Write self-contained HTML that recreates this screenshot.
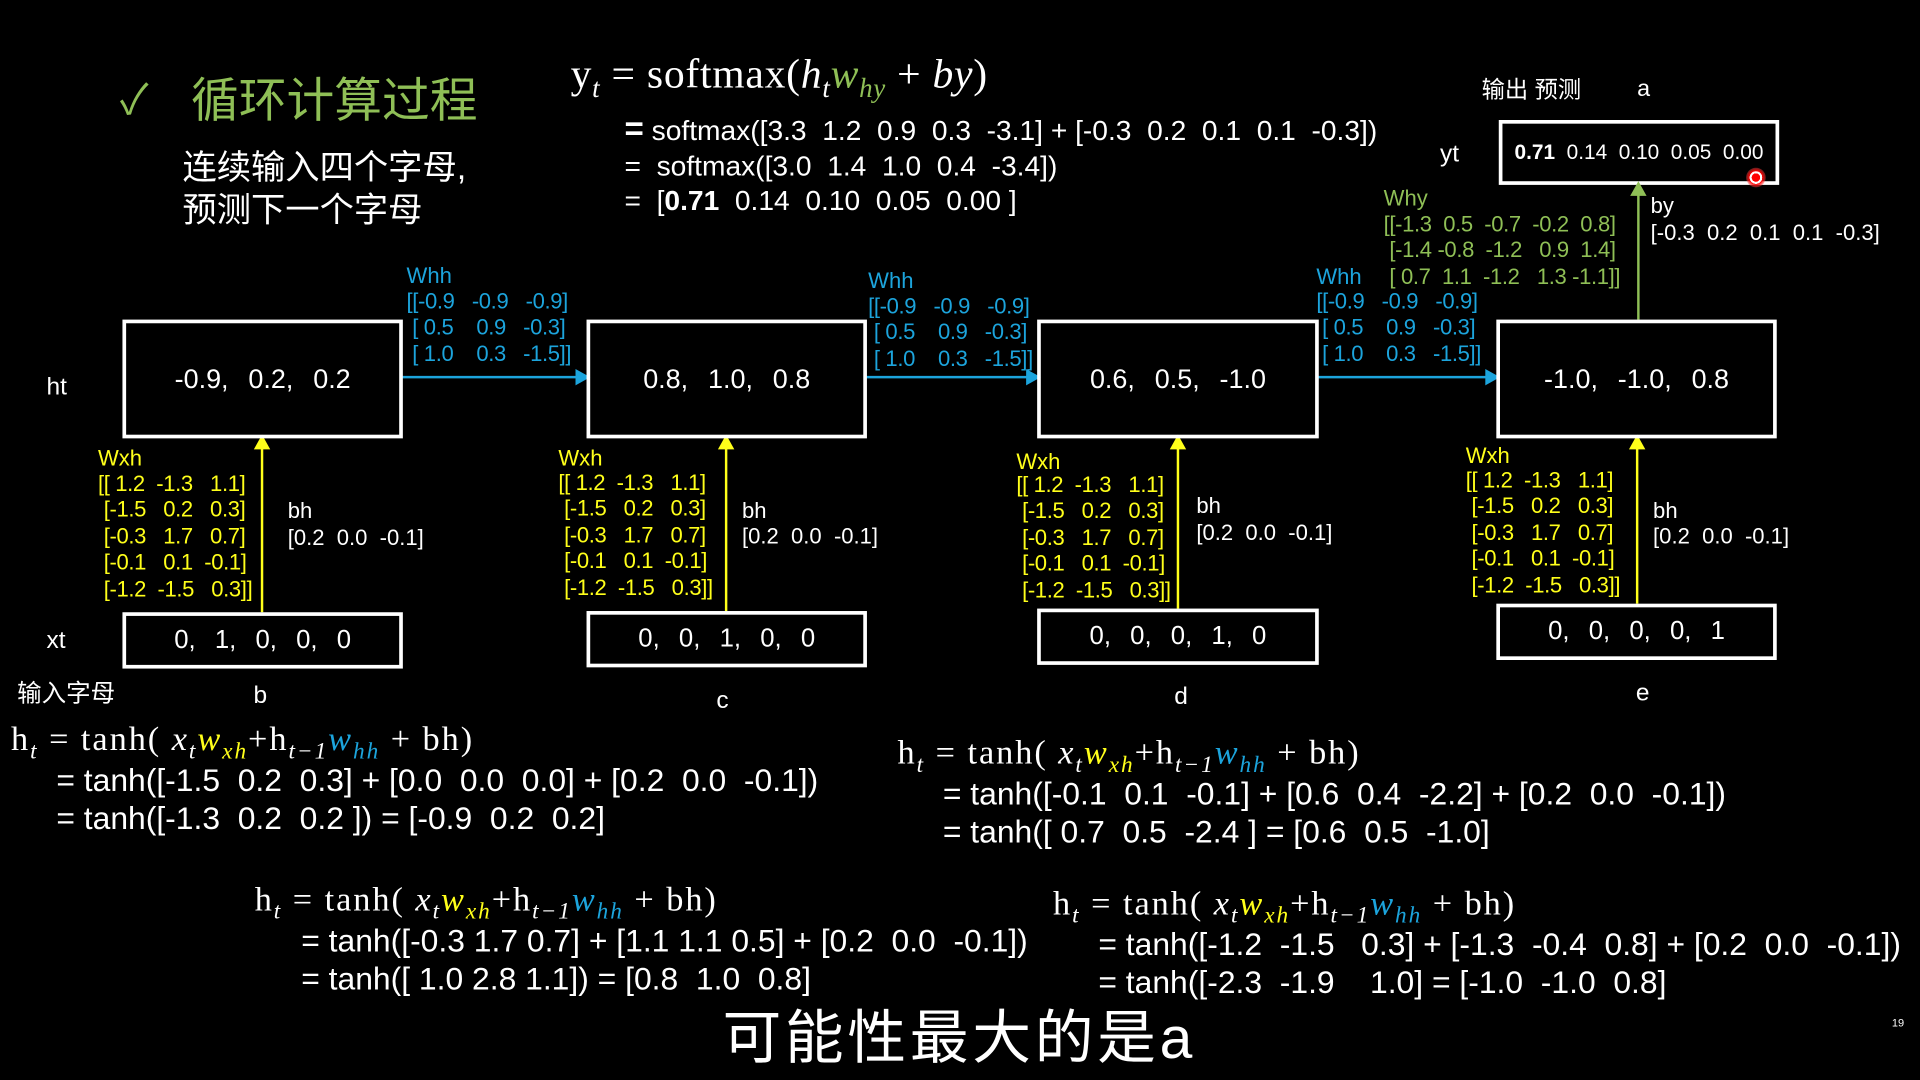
<!DOCTYPE html>
<html><head><meta charset="utf-8"><style>
html,body{margin:0;padding:0;background:#000;width:1920px;height:1080px;overflow:hidden}
#w{position:absolute;left:0;top:0;width:1568px;height:882px;transform:scale(1.22449);transform-origin:0 0;color:#fff;font-family:"Liberation Sans","Noto Sans CJK SC",sans-serif}
.t{position:absolute;white-space:pre;line-height:1;transform:translateY(-50%)}
.m{position:absolute;white-space:pre;font-size:18px;line-height:21.4px;letter-spacing:-0.3px}
.y{color:#ffff1a}.b{color:#1ca4dc}.g{color:#8fbf56}
.box{position:absolute;border:3px solid #fff;box-sizing:border-box;display:flex;align-items:center;justify-content:center;font-size:22px;word-spacing:2px;white-space:nowrap}
.s{font-family:"Liberation Serif",serif}
.i{font-style:italic}
.e{font-size:26px;letter-spacing:0px}
.f{font-size:28px;letter-spacing:1.6px}
.f sub{font-size:19px}
</style></head><body><div id="w">
<div class="t g" style="left:98px;top:82px;font-size:34px">✓</div>
<div class="t g" style="left:156px;top:80px;font-size:39px;font-family:'Noto Sans CJK SC',sans-serif">循环计算过程</div>
<div class="t" style="left:149px;top:137px;font-size:28px">连续输入四个字母,</div>
<div class="t" style="left:149px;top:172px;font-size:28px">预测下一个字母</div>
<div class="t s" style="left:466px;top:64px;font-size:34px;letter-spacing:0.6px">y<sub class="i" style="font-size:22px">t</sub> = softmax(<span class="i">h</span><sub class="i" style="font-size:22px">t</sub><span class="i g">w<sub style="font-size:22px">hy</sub></span> + <span class="i">by</span>)</div>
<div class="t" style="left:510px;top:106px;font-size:23px"><b style="font-size:27px">=</b> softmax([3.3  1.2  0.9  0.3  -3.1] + [-0.3  0.2  0.1  0.1  -0.3])</div>
<div class="t" style="left:510px;top:136px;font-size:23px">=  softmax([3.0  1.4  1.0  0.4  -3.4])</div>
<div class="t" style="left:510px;top:164px;font-size:23px">=  [<b>0.71</b>  0.14  0.10  0.05  0.00 ]</div>
<div class="t" style="left:1210px;top:74px;font-size:19px">输出 预测</div>
<div class="t" style="left:1337px;top:73px;font-size:19px">a</div>
<div class="t" style="left:1176px;top:126px;font-size:20px">yt</div>
<div class="box" style="left:1224px;top:98px;width:229px;height:53px;font-size:17px;word-spacing:0px"><b>0.71</b>&nbsp; 0.14&nbsp; 0.10&nbsp; 0.05&nbsp; 0.00</div>
<div style="position:absolute;left:1426px;top:137px;width:16px;height:16px;border-radius:50%;background:radial-gradient(#f00 30%,#fff 31%,#fff 45%,#f00 46%,rgba(255,80,80,.4) 70%,transparent)"></div>
<div class="t g" style="left:1130px;top:162px;font-size:18px">Why</div>
<div class="m g" style="left:1130px;top:173px">[[-1.3  0.5  -0.7  -0.2  0.8]
 [-1.4 -0.8  -1.2   0.9  1.4]
 [ 0.7  1.1  -1.2   1.3 -1.1]]</div>
<div class="t" style="left:1348px;top:168px;font-size:18px">by</div>
<div class="t" style="left:1348px;top:190px;font-size:18px">[-0.3  0.2  0.1  0.1  -0.3]</div>

<svg style="position:absolute;left:0;top:0" width="1568" height="882">
<g stroke="#1ca4dc" stroke-width="2" fill="#1ca4dc">
<line x1="328" y1="308" x2="472" y2="308"/><path d="M480 308 l-9 -5 v10z"/>
<line x1="707" y1="308" x2="840" y2="308"/><path d="M848 308 l-9 -5 v10z"/>
<line x1="1076" y1="308" x2="1215" y2="308"/><path d="M1223 308 l-9 -5 v10z"/>
</g>
<g stroke="#ffff1a" stroke-width="2" fill="#ffff1a">
<line x1="214" y1="500" x2="214" y2="365"/><path d="M214 357 l-5 9 h10z"/>
<line x1="593" y1="499" x2="593" y2="365"/><path d="M593 357 l-5 9 h10z"/>
<line x1="962" y1="497" x2="962" y2="365"/><path d="M962 357 l-5 9 h10z"/>
<line x1="1337" y1="493" x2="1337" y2="365"/><path d="M1337 357 l-5 9 h10z"/>
</g>
<g stroke="#8fbf56" stroke-width="2" fill="#8fbf56">
<line x1="1338" y1="261" x2="1338" y2="158"/><path d="M1338 150 l-5 9 h10z"/>
</g>
</svg>

<div class="t" style="left:38px;top:316px;font-size:20px">ht</div>
<div class="t" style="left:38px;top:523px;font-size:20px">xt</div>
<div class="box" style="left:100px;top:261px;width:229px;height:97px">-0.9,&nbsp; 0.2,&nbsp; 0.2</div>
<div class="box" style="left:479px;top:261px;width:229px;height:97px">0.8,&nbsp; 1.0,&nbsp; 0.8</div>
<div class="box" style="left:847px;top:261px;width:230px;height:97px">0.6,&nbsp; 0.5,&nbsp; -1.0</div>
<div class="box" style="left:1222px;top:261px;width:229px;height:97px">-1.0,&nbsp; -1.0,&nbsp; 0.8</div>
<div class="box" style="left:100px;top:500px;width:229px;height:46px;font-size:21px">0,&nbsp; 1,&nbsp; 0,&nbsp; 0,&nbsp; 0</div>
<div class="box" style="left:479px;top:499px;width:229px;height:46px;font-size:21px">0,&nbsp; 0,&nbsp; 1,&nbsp; 0,&nbsp; 0</div>
<div class="box" style="left:847px;top:497px;width:230px;height:46px;font-size:21px">0,&nbsp; 0,&nbsp; 0,&nbsp; 1,&nbsp; 0</div>
<div class="box" style="left:1222px;top:493px;width:229px;height:46px;font-size:21px">0,&nbsp; 0,&nbsp; 0,&nbsp; 0,&nbsp; 1</div>

<div class="t b" style="left:332px;top:225px;font-size:18px">Whh</div>
<div class="m b" style="left:332px;top:236px">[[-0.9   -0.9   -0.9]
 [ 0.5    0.9   -0.3]
 [ 1.0    0.3   -1.5]]</div>
<div class="t b" style="left:709px;top:229px;font-size:18px">Whh</div>
<div class="m b" style="left:709px;top:240px">[[-0.9   -0.9   -0.9]
 [ 0.5    0.9   -0.3]
 [ 1.0    0.3   -1.5]]</div>
<div class="t b" style="left:1075px;top:226px;font-size:18px">Whh</div>
<div class="m b" style="left:1075px;top:236px">[[-0.9   -0.9   -0.9]
 [ 0.5    0.9   -0.3]
 [ 1.0    0.3   -1.5]]</div>

<div class="t y" style="left:80px;top:374px;font-size:18px">Wxh</div>
<div class="m y" style="left:80px;top:385px">[[ 1.2  -1.3   1.1]
 [-1.5   0.2   0.3]
 [-0.3   1.7   0.7]
 [-0.1   0.1  -0.1]
 [-1.2  -1.5   0.3]]</div>
<div class="t" style="left:235px;top:417px;font-size:18px">bh</div>
<div class="t" style="left:235px;top:439px;font-size:18px">[0.2  0.0  -0.1]</div>

<div class="t y" style="left:456px;top:374px;font-size:18px">Wxh</div>
<div class="m y" style="left:456px;top:384px">[[ 1.2  -1.3   1.1]
 [-1.5   0.2   0.3]
 [-0.3   1.7   0.7]
 [-0.1   0.1  -0.1]
 [-1.2  -1.5   0.3]]</div>
<div class="t" style="left:606px;top:417px;font-size:18px">bh</div>
<div class="t" style="left:606px;top:438px;font-size:18px">[0.2  0.0  -0.1]</div>

<div class="t y" style="left:830px;top:377px;font-size:18px">Wxh</div>
<div class="m y" style="left:830px;top:386px">[[ 1.2  -1.3   1.1]
 [-1.5   0.2   0.3]
 [-0.3   1.7   0.7]
 [-0.1   0.1  -0.1]
 [-1.2  -1.5   0.3]]</div>
<div class="t" style="left:977px;top:413px;font-size:18px">bh</div>
<div class="t" style="left:977px;top:435px;font-size:18px">[0.2  0.0  -0.1]</div>

<div class="t y" style="left:1197px;top:372px;font-size:18px">Wxh</div>
<div class="m y" style="left:1197px;top:382px">[[ 1.2  -1.3   1.1]
 [-1.5   0.2   0.3]
 [-0.3   1.7   0.7]
 [-0.1   0.1  -0.1]
 [-1.2  -1.5   0.3]]</div>
<div class="t" style="left:1350px;top:417px;font-size:18px">bh</div>
<div class="t" style="left:1350px;top:438px;font-size:18px">[0.2  0.0  -0.1]</div>

<div class="t" style="left:14px;top:567px;font-size:20px">输入字母</div>
<div class="t" style="left:207px;top:568px;font-size:20px">b</div>
<div class="t" style="left:585px;top:572px;font-size:20px">c</div>
<div class="t" style="left:959px;top:569px;font-size:20px">d</div>
<div class="t" style="left:1336px;top:566px;font-size:20px">e</div>

<div class="t s f" style="left:9px;top:607px">h<sub class="i">t</sub> = tanh( <span class="i">x<sub>t</sub></span><span class="i y">w<sub>xh</sub></span>+<span>h<sub class="i">t−1</sub></span><span class="i b">w<sub>hh</sub></span> + bh)</div>
<div class="t e" style="left:46px;top:637px">= tanh([-1.5  0.2  0.3] + [0.0  0.0  0.0] + [0.2  0.0  -0.1])</div>
<div class="t e" style="left:46px;top:668px">= tanh([-1.3  0.2  0.2 ]) = [-0.9  0.2  0.2]</div>

<div class="t s f" style="left:733px;top:618px">h<sub class="i">t</sub> = tanh( <span class="i">x<sub>t</sub></span><span class="i y">w<sub>xh</sub></span>+<span>h<sub class="i">t−1</sub></span><span class="i b">w<sub>hh</sub></span> + bh)</div>
<div class="t e" style="left:770px;top:648px">= tanh([-0.1  0.1  -0.1] + [0.6  0.4  -2.2] + [0.2  0.0  -0.1])</div>
<div class="t e" style="left:770px;top:679px">= tanh([ 0.7  0.5  -2.4 ] = [0.6  0.5  -1.0]</div>

<div class="t s f" style="left:208px;top:738px">h<sub class="i">t</sub> = tanh( <span class="i">x<sub>t</sub></span><span class="i y">w<sub>xh</sub></span>+<span>h<sub class="i">t−1</sub></span><span class="i b">w<sub>hh</sub></span> + bh)</div>
<div class="t e" style="left:246px;top:768px">= tanh([-0.3 1.7 0.7] + [1.1 1.1 0.5] + [0.2  0.0  -0.1])</div>
<div class="t e" style="left:246px;top:799px">= tanh([ 1.0 2.8 1.1]) = [0.8  1.0  0.8]</div>

<div class="t s f" style="left:860px;top:741px">h<sub class="i">t</sub> = tanh( <span class="i">x<sub>t</sub></span><span class="i y">w<sub>xh</sub></span>+<span>h<sub class="i">t−1</sub></span><span class="i b">w<sub>hh</sub></span> + bh)</div>
<div class="t e" style="left:897px;top:771px">= tanh([-1.2  -1.5   0.3] + [-1.3  -0.4  0.8] + [0.2  0.0  -0.1])</div>
<div class="t e" style="left:897px;top:802px">= tanh([-2.3  -1.9    1.0] = [-1.0  -1.0  0.8]</div>

<div class="t" style="left:590px;top:849px;font-size:48px;letter-spacing:3px">可能性最大的是a</div>
<div class="t" style="left:1545px;top:836px;font-size:9px">19</div>
</div></body></html>
